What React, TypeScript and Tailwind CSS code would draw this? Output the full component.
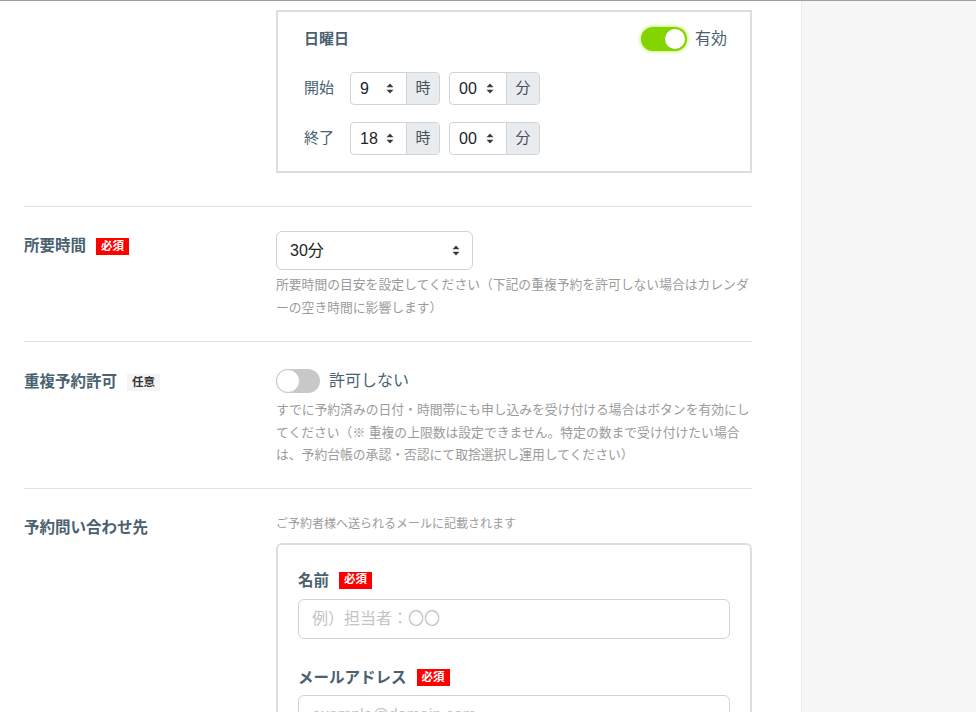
import type { ReactNode } from 'react';

const font = { fontFamily: '"Liberation Sans", "Noto Sans CJK JP", sans-serif' };

function Caret() {
  return (
    <svg width="8" height="11" viewBox="0 0 8 11" className="shrink-0">
      <path d="M4 0.5 L7.5 4.2 H0.5 Z" fill="#343a40" />
      <path d="M4 10.5 L7.5 6.8 H0.5 Z" fill="#343a40" />
    </svg>
  );
}

function Required() {
  return (
    <span className="inline-flex h-[17px] items-center bg-[#ff0000] px-[5px] text-[11.5px] font-bold leading-none text-white">
      必須
    </span>
  );
}

function Optional() {
  return (
    <span className="inline-flex h-[17px] items-center bg-[#f3f4f6] px-[5px] text-[11.5px] font-bold leading-none text-[#333]">
      任意
    </span>
  );
}

function TimeSelect({ value, unit, w }: { value: string; unit: string; w: string }) {
  return (
    <div className="flex h-[33px] rounded-[4px] border border-[#ced4da] bg-white">
      <div className={`flex items-center justify-between pl-[9px] pr-[12px] text-[16px] text-[#212529] ${w}`}>
        <span>{value}</span>
        <Caret />
      </div>
      <div className="flex w-[33px] items-center justify-center rounded-r-[4px] border-l border-[#ced4da] bg-[#e9ecef] text-[15px] text-[#495057]">
        {unit}
      </div>
    </div>
  );
}

function Section({ label, badge, children, className }: { label: string; badge?: ReactNode; children: ReactNode; className: string }) {
  return (
    <div className={`flex border-t border-[#dee2e6] ${className}`}>
      <div className="flex w-[252px] shrink-0 items-start gap-[10px]">
        <span className="text-[15.5px] font-bold text-[#4a6170]">{label}</span>
        {badge && <span className="-mt-[1px]">{badge}</span>}
      </div>
      <div className="w-[476px]">{children}</div>
    </div>
  );
}

const help = 'text-[12.8px] leading-[22.5px] text-[#9b9b9b]';

export default function App() {
  return (
    <div style={font} className="flex h-[712px] w-[976px] overflow-hidden border-t border-[#9e9e9e] bg-white">
      <main className="w-[801px] shrink-0 pl-[24px]">
        {/* weekday box */}
        <div className="ml-[252px] mt-[9px] w-[476px] border-2 border-[#dedede] pb-[16px] pl-[26px] pr-[23px] pt-[15px]">
          <div className="flex h-[24px] items-center justify-between">
            <span className="text-[15px] font-bold text-[#4a6170]">日曜日</span>
            <div className="flex items-center gap-[8px]">
              <span className="relative h-[24px] w-[46px] rounded-full bg-[#84d400] shadow-[0_0_4px_#a6e830]">
                <span className="absolute right-[2px] top-[2px] h-[20px] w-[20px] rounded-full bg-white" />
              </span>
              <span className="text-[16px] text-[#4a6170]">有効</span>
            </div>
          </div>
          <div className="mt-[21px] flex flex-col gap-[17px]">
            {[
              ['開始', '9'],
              ['終了', '18'],
            ].map(([l, h]) => (
              <div key={l} className="flex items-center">
                <span className="w-[46px] text-[15px] text-[#4a6170]">{l}</span>
                <div className="flex gap-[9px]">
                  <TimeSelect value={h} unit="時" w="w-[55px]" />
                  <TimeSelect value="00" unit="分" w="w-[56px]" />
                </div>
              </div>
            ))}
          </div>
        </div>

        <div className="w-[728px]">
          <Section label="所要時間" badge={<Required />} className="mt-[33px] pb-[22px] pt-[27px]">
            <div className="-mt-[3px] flex h-[39px] w-[197px] items-center justify-between rounded-[6px] border border-[#ced4da] pl-[13px] pr-[12px] text-[16px] text-[#212529]">
              <span>30分</span>
              <Caret />
            </div>
            <p className={`mt-[4px] ${help}`}>
              所要時間の目安を設定してください（下記の重複予約を許可しない場合はカレンダーの空き時間に影響します）
            </p>
          </Section>

          <Section label="重複予約許可" badge={<Optional />} className="pb-[21px] pt-[28px]">
            <div className="-mt-[1px] flex h-[24px] items-center gap-[9px]">
              <span className="relative h-[24px] w-[44px] rounded-full bg-[#c8c8c8]">
                <span className="absolute left-0 top-0 h-[24px] w-[24px] rounded-full border border-[#c8c8c8] bg-white" />
              </span>
              <span className="text-[16px] text-[#4a6170]">許可しない</span>
            </div>
            <p className={`mt-[6px] ${help}`}>
              すでに予約済みの日付・時間帯にも申し込みを受け付ける場合はボタンを有効にしてください（※ 重複の上限数は設定できません。特定の数まで受け付けたい場合は、予約台帳の承認・否認にて取捨選択し運用してください）
            </p>
          </Section>

          <Section label="予約問い合わせ先" className="pt-[27px]">
            <p className="-mt-[1px] text-[12px] leading-[18px] text-[#9b9b9b]">ご予約者様へ送られるメールに記載されます</p>
            <div className="mt-[10px] h-[200px] rounded-[6px] border-2 border-[#dedede] px-[20px] pt-[24px]">
              <div className="flex items-center gap-[10px]">
                <span className="text-[15.5px] font-bold text-[#4a6170]">名前</span>
                <Required />
              </div>
              <div className="mt-[7px] flex h-[40px] items-center rounded-[6px] border border-[#ced4da] px-[13px] text-[16px] text-[#c4c4c4]">
                例）担当者：〇〇
              </div>
              <div className="mt-[27px] flex items-center gap-[10px]">
                <span className="text-[15.5px] font-bold text-[#4a6170]">メールアドレス</span>
                <Required />
              </div>
              <div className="mt-[6px] flex h-[40px] items-center rounded-[6px] border border-[#ced4da] px-[13px] text-[16px] text-[#c4c4c4]">
                example@domain.com
              </div>
            </div>
          </Section>
        </div>
      </main>
      <aside className="flex-1 border-l border-[#ececec] bg-[#f6f6f6]" />
    </div>
  );
}
